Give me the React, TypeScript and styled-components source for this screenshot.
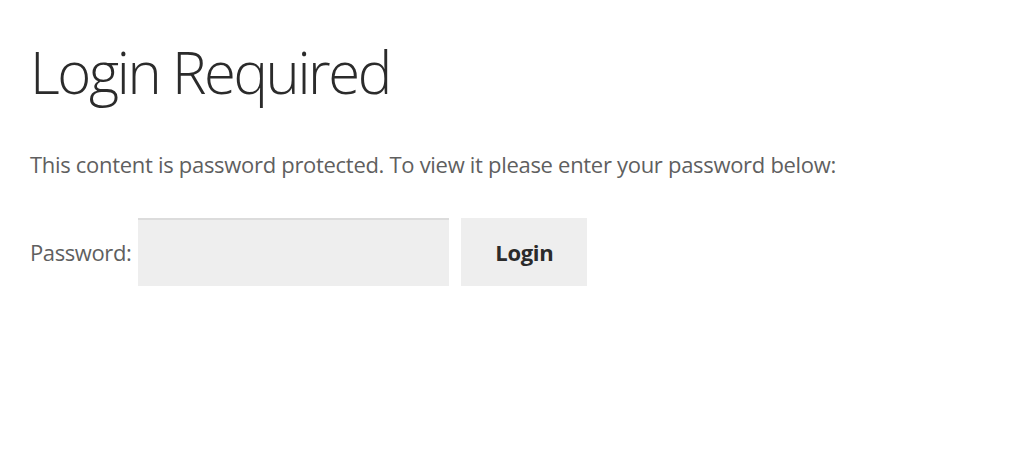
import React from "react";
import styled, { createGlobalStyle } from "styled-components";

const Global = createGlobalStyle`
  html, body { margin: 0; padding: 0; background: #fff; }
  body { font-family: "Open Sans", "Noto Sans", sans-serif; }
`;

const Page = styled.main`
  padding: 36px 30px 0 30px;
`;

const Title = styled.h1`
  margin: 0;
  font-family: "Open Sans", sans-serif;
  font-weight: 300;
  font-size: 58px;
  line-height: 72px;
  color: #2b2b2b;
  letter-spacing: -2.4px;
`;

const Lead = styled.p`
  margin: 41px 0 0 0;
  font-size: 22px;
  line-height: 30px;
  color: #5f5f5f;
  letter-spacing: -0.3px;
`;

const Form = styled.form`
  display: flex;
  align-items: center;
  margin-top: 39px;
`;

const Label = styled.label`
  font-size: 22px;
  color: #5f5f5f;
  letter-spacing: -0.4px;
  margin-right: 7px;
`;

const Input = styled.input`
  box-sizing: border-box;
  width: 311px;
  height: 68px;
  border: none;
  border-top: 2px solid #dcdcdc;
  background: #eeeeee;
  outline: none;
  margin-right: 12px;
`;

const Button = styled.button`
  box-sizing: border-box;
  width: 126px;
  height: 68px;
  border: none;
  background: #eeeeee;
  font-family: "Open Sans", sans-serif;
  font-weight: 700;
  font-size: 22px;
  color: #2b2b2b;
  letter-spacing: -0.3px;
  padding: 0;
`;

export default function App() {
  return (
    <>
      <Global />
      <Page>
        <Title>Login Required</Title>
        <Lead>This content is password protected. To view it please enter your password below:</Lead>
        <Form onSubmit={(e) => e.preventDefault()}>
          <Label htmlFor="pwd">Password:</Label>
          <Input id="pwd" type="password" />
          <Button type="submit">Login</Button>
        </Form>
      </Page>
    </>
  );
}
